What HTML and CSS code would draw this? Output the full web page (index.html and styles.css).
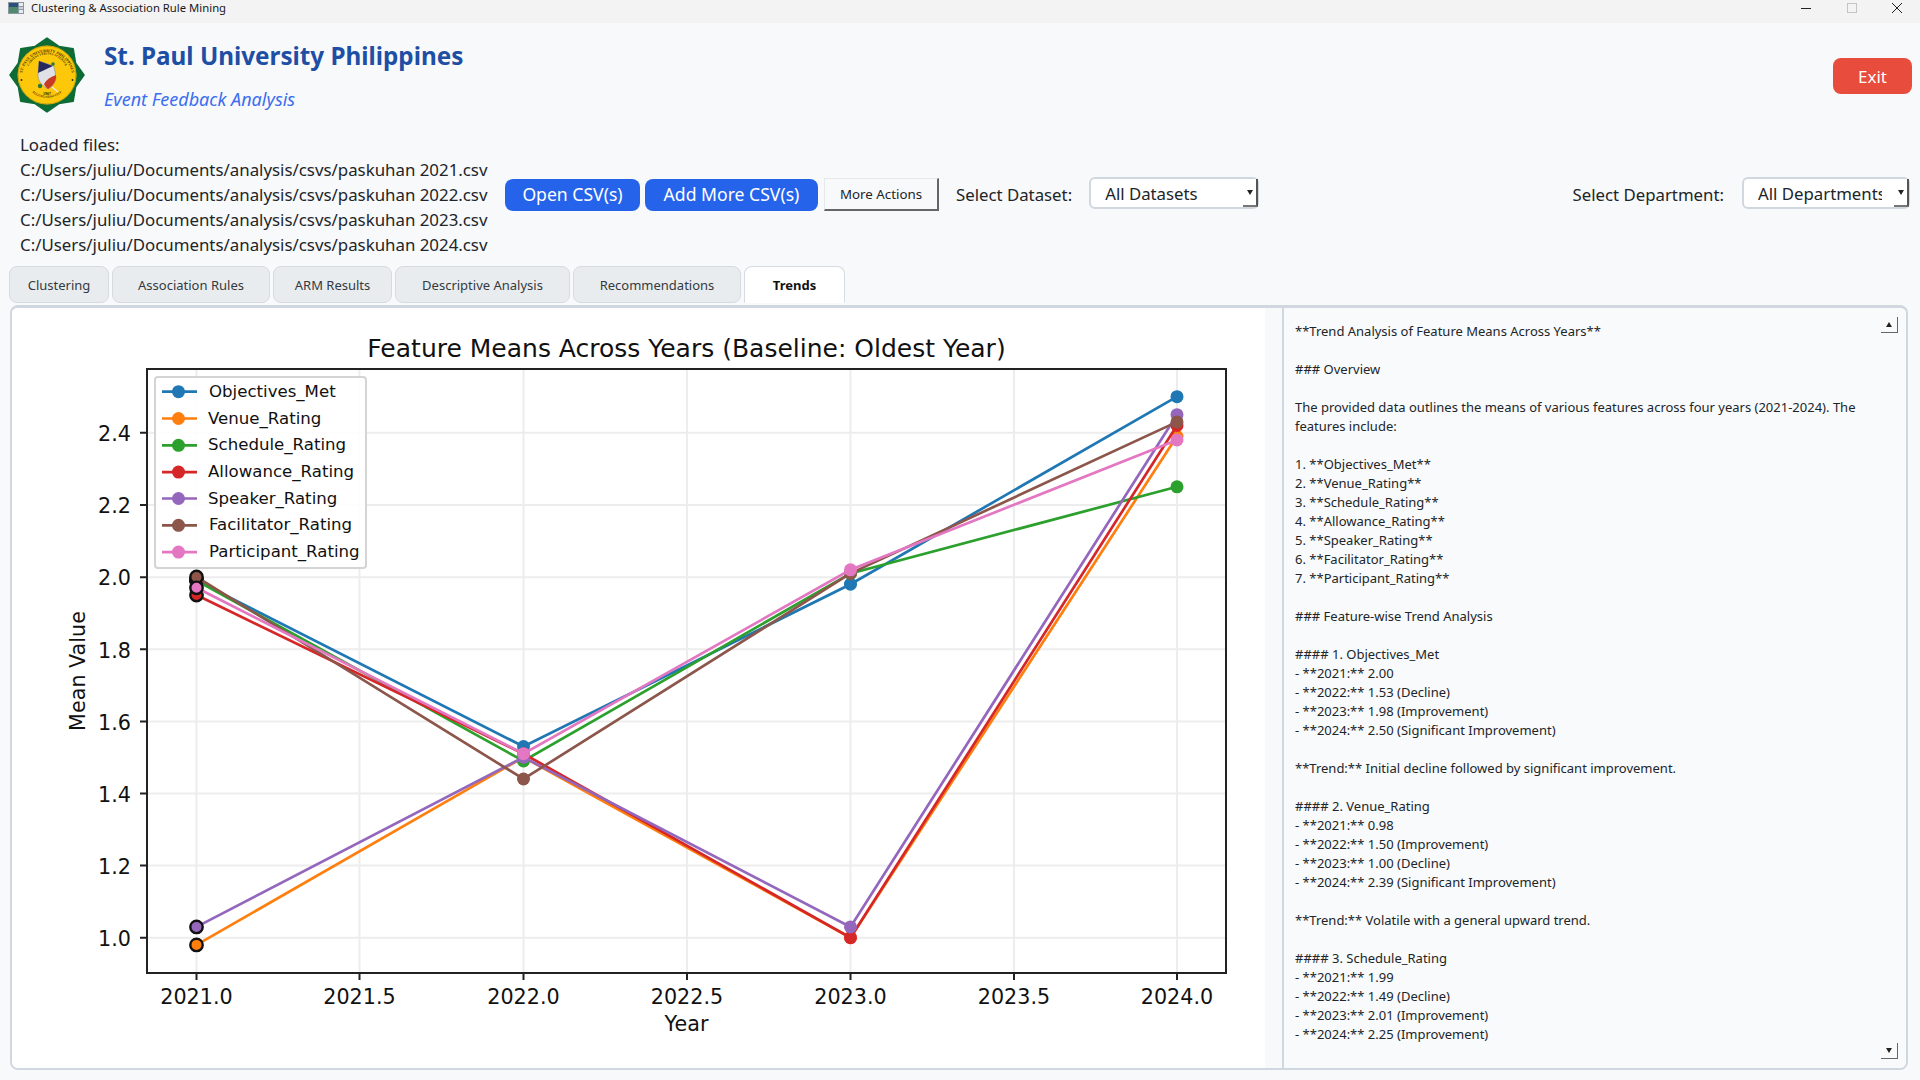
FILE: index.html
```html
<!DOCTYPE html>
<html lang="en">
<head>
    <meta charset="UTF-8" />
    <title>Clustering &amp; Association Rule Mining</title>
    <link rel="stylesheet" href="styles.css">
</head>
<body>
<div class="window">
    <!-- Title bar -->
    <div class="titlebar">
        <svg class="app-icon" width="16" height="12" viewBox="0 0 16 12">
            <rect width="16" height="12" fill="#8a97a5"/>
            <rect x="1" y="1" width="9" height="10" fill="#4f8a6c"/>
            <rect x="1" y="1" width="9" height="4" fill="#2c4f7c"/>
            <rect x="11" y="1" width="4" height="3" fill="#e8ecef"/>
            <rect x="11" y="5" width="4" height="2" fill="#c9d2d8"/>
            <rect x="11" y="8" width="4" height="3" fill="#e8ecef"/>
        </svg>
        <span class="titlebar-text">Clustering &amp; Association Rule Mining</span>
        <div class="window-controls">
            <svg width="12" height="12" viewBox="0 0 12 12"><path d="M1 6.5H11" stroke="#222" stroke-width="1"/></svg>
            <svg width="12" height="12" viewBox="0 0 12 12"><rect x="1.5" y="1.5" width="9" height="9" fill="none" stroke="#c4c4c4"/></svg>
            <svg width="12" height="12" viewBox="0 0 12 12"><path d="M1 1L11 11M11 1L1 11" stroke="#222" stroke-width="1"/></svg>
        </div>
    </div>

    <!-- Header with logo -->
    <div class="header">
        <svg class="logo" width="78" height="78" viewBox="-39 -39 78 78">
            <path d="M0-37 11.9-28.6 26.2-26.2 28.6-11.9 37 0 28.6 11.9 26.2 26.2 11.9 28.6 0 37-11.9 28.6-26.2 26.2-28.6 11.9-37 0-28.6-11.9-26.2-26.2-11.9-28.6Z" fill="#0d6b35" stroke="#0d6b35" stroke-width="1.5" stroke-linejoin="round"/>
            <circle r="29.5" fill="#fdc80a"/>
            <circle r="29" fill="none" stroke="#8a7a1a" stroke-width=".5"/>
            <path id="ring" d="M-25 2A25 25 0 0 1 25 2" fill="none"/>
            <text class="logo-ring"><textPath href="#ring" startOffset="50%" text-anchor="middle">ST. PAUL UNIVERSITY PHILIPPINES</textPath></text>
            <path id="ring2" d="M-20.500 0A20.500 20.500 0 0 1 20.500 0" fill="none"/>
            <text class="logo-ring small"><textPath href="#ring2" startOffset="50%" text-anchor="middle">CARITAS VERITAS SCIENTIA</textPath></text>
            <path id="ring3" d="M-20 12A24 24 0 0 0 20 12" fill="none"/>
            <text class="logo-ring small"><textPath href="#ring3" startOffset="50%" text-anchor="middle">TUGUEGARAO CITY</textPath></text>
            <path d="M-8-14 7-9 9 3C8 9 4 12 1 14-3 12-9 7-9 1Z" fill="#dfe1e6" stroke="#666" stroke-width=".4"/>
            <path d="M-8-14 6-9-9-2Z" fill="#27285f"/>
            <path d="M9 0 9 3C8 9 4 12 1 14-1 12.500-2 11-3 9-1 5 3 2 9 0Z" fill="#c93a22"/>
            <circle cx="6" cy="-11" r="1.800" fill="#2c7a35"/>
            <circle cx="-7" cy="11" r="2.200" fill="#2c7a35"/>
            <path d="M5 12 11 17" stroke="#e8e8e8" stroke-width="1.500"/>
            <text class="logo-year" x="0" y="20" text-anchor="middle">1907</text>
            <circle cx="-25.500" cy="5" r=".9" fill="#222"/>
            <circle cx="25.500" cy="5" r=".9" fill="#222"/>
        </svg>
        <div class="brand">
            <div class="brand-title">St. Paul University Philippines</div>
            <div class="brand-sub">Event Feedback Analysis</div>
        </div>
        <button class="btn btn-exit">Exit</button>
    </div>

    <!-- Files and actions row -->
    <div class="controls">
        <div class="files">
            <div>Loaded files:</div>
            <div>C:/Users/juliu/Documents/analysis/csvs/paskuhan 2021.csv</div>
            <div>C:/Users/juliu/Documents/analysis/csvs/paskuhan 2022.csv</div>
            <div>C:/Users/juliu/Documents/analysis/csvs/paskuhan 2023.csv</div>
            <div>C:/Users/juliu/Documents/analysis/csvs/paskuhan 2024.csv</div>
        </div>
        <button class="btn btn-blue btn-open">Open CSV(s)</button>
        <button class="btn btn-blue btn-add">Add More CSV(s)</button>
        <button class="btn-more">More Actions</button>
        <span class="field-label">Select Dataset:</span>
        <div class="combo"><span class="combo-text">All Datasets</span><span class="combo-drop"></span></div>
        <span class="field-label dept-label">Select Department:</span>
        <div class="combo combo-dept"><span class="combo-text">All Departments</span><span class="combo-drop"></span></div>
    </div>

    <!-- Tabs -->
    <div class="tabs">
        <div class="tab">Clustering</div>
        <div class="tab">Association Rules</div>
        <div class="tab">ARM Results</div>
        <div class="tab">Descriptive Analysis</div>
        <div class="tab">Recommendations</div>
        <div class="tab tab-active">Trends</div>
    </div>

    <!-- Trends tab: chart on the left, text on the right -->
    <div class="panel">
        <div class="chart-area">
            <svg class="chart" width="1253" height="760" viewBox="12 308 1253 760">
                <g class="grid">
                    <path d="M196.500 369V973M359.500 369V973M523.500 369V973M687 369V973M850.500 369V973M1014 369V973M1177 369V973"/>
                    <path d="M147 937.700H1226M147 865.600H1226M147 793.500H1226M147 721.400H1226M147 649.300H1226M147 577.200H1226M147 505H1226M147 432.800H1226"/>
                </g>

                <g class="series c1">
                    <polyline points="196.500,580.600 523.500,746.500 850.500,584.200 1177,396.700"/>
                    <circle class="first" cx="196.500" cy="580.600"/><circle cx="523.500" cy="746.500"/><circle cx="850.500" cy="584.200"/><circle cx="1177" cy="396.700"/>
                </g>
                <g class="series c2">
                    <polyline points="196.500,944.900 523.500,757.300 850.500,937.700 1177,436.300"/>
                    <circle class="first" cx="196.500" cy="944.900"/><circle cx="523.500" cy="757.300"/><circle cx="850.500" cy="937.700"/><circle cx="1177" cy="436.300"/>
                </g>
                <g class="series c3">
                    <polyline points="196.500,580.600 523.500,761 850.500,573.400 1177,486.800"/>
                    <circle class="first" cx="196.500" cy="580.600"/><circle cx="523.500" cy="761"/><circle cx="850.500" cy="573.400"/><circle cx="1177" cy="486.800"/>
                </g>
                <g class="series c4">
                    <polyline points="196.500,595 523.500,753.700 850.500,937.700 1177,425.500"/>
                    <circle class="first" cx="196.500" cy="595"/><circle cx="523.500" cy="753.700"/><circle cx="850.500" cy="937.700"/><circle cx="1177" cy="425.500"/>
                </g>
                <g class="series c5">
                    <polyline points="196.500,926.900 523.500,757.300 850.500,926.900 1177,414.700"/>
                    <circle class="first" cx="196.500" cy="926.900"/><circle cx="523.500" cy="757.300"/><circle cx="850.500" cy="926.900"/><circle cx="1177" cy="414.700"/>
                </g>
                <g class="series c6">
                    <polyline points="196.500,577 523.500,779 850.500,573.400 1177,421.900"/>
                    <circle class="first" cx="196.500" cy="577"/><circle cx="523.500" cy="779"/><circle cx="850.500" cy="573.400"/><circle cx="1177" cy="421.900"/>
                </g>
                <g class="series c7">
                    <polyline points="196.500,587.800 523.500,753.700 850.500,569.800 1177,439.900"/>
                    <circle class="first" cx="196.500" cy="587.800"/><circle cx="523.500" cy="753.700"/><circle cx="850.500" cy="569.800"/><circle cx="1177" cy="439.900"/>
                </g>

                <rect class="spines" x="147" y="369" width="1079" height="604"/>
                <path class="ticks" d="M196.500 973v7M359.500 973v7M523.500 973v7M687 973v7M850.500 973v7M1014 973v7M1177 973v7M147 937.700h-7M147 865.600h-7M147 793.500h-7M147 721.400h-7M147 649.300h-7M147 577.200h-7M147 505h-7M147 432.800h-7"/>

                <text class="chart-title" x="686.500" y="357" text-anchor="middle">Feature Means Across Years (Baseline: Oldest Year)</text>

                <g class="tick-text" text-anchor="middle">
                    <text x="196.500" y="1004">2021.0</text>
                    <text x="359.500" y="1004">2021.5</text>
                    <text x="523.500" y="1004">2022.0</text>
                    <text x="687" y="1004">2022.5</text>
                    <text x="850.500" y="1004">2023.0</text>
                    <text x="1014" y="1004">2023.5</text>
                    <text x="1177" y="1004">2024.0</text>
                </g>
                <g class="tick-text" text-anchor="end">
                    <text x="131" y="946">1.0</text>
                    <text x="131" y="874">1.2</text>
                    <text x="131" y="802">1.4</text>
                    <text x="131" y="730">1.6</text>
                    <text x="131" y="658">1.8</text>
                    <text x="131" y="585">2.0</text>
                    <text x="131" y="513">2.2</text>
                    <text x="131" y="441">2.4</text>
                </g>
                <text class="tick-text" x="686.500" y="1031" text-anchor="middle">Year</text>
                <text class="tick-text" transform="translate(85 671) rotate(-90)" text-anchor="middle">Mean Value</text>

                <rect class="legend-box" x="155" y="377" width="211" height="191" rx="3"/>
                <g class="series c1"><path d="M162 391.700H197"/><circle cx="178.500" cy="391.700"/></g>
                <g class="series c2"><path d="M162 418.500H197"/><circle cx="178.500" cy="418.500"/></g>
                <g class="series c3"><path d="M162 445.300H197"/><circle cx="178.500" cy="445.300"/></g>
                <g class="series c4"><path d="M162 472.100H197"/><circle cx="178.500" cy="472.100"/></g>
                <g class="series c5"><path d="M162 498.500H197"/><circle cx="178.500" cy="498.500"/></g>
                <g class="series c6"><path d="M162 525.300H197"/><circle cx="178.500" cy="525.300"/></g>
                <g class="series c7"><path d="M162 552.100H197"/><circle cx="178.500" cy="552.100"/></g>
                <g class="legend-text">
                    <text x="209" y="397">Objectives_Met</text>
                    <text x="208" y="424">Venue_Rating</text>
                    <text x="208" y="450">Schedule_Rating</text>
                    <text x="208" y="477">Allowance_Rating</text>
                    <text x="208" y="504">Speaker_Rating</text>
                    <text x="209" y="530">Facilitator_Rating</text>
                    <text x="209" y="557">Participant_Rating</text>
                </g>
            </svg>
        </div>
        <div class="text-panel">
            <pre class="report">**Trend Analysis of Feature Means Across Years**

### Overview

The provided data outlines the means of various features across four years (2021-2024). The
features include:

1. **Objectives_Met**
2. **Venue_Rating**
3. **Schedule_Rating**
4. **Allowance_Rating**
5. **Speaker_Rating**
6. **Facilitator_Rating**
7. **Participant_Rating**

### Feature-wise Trend Analysis

#### 1. Objectives_Met
- **2021:** 2.00
- **2022:** 1.53 (Decline)
- **2023:** 1.98 (Improvement)
- **2024:** 2.50 (Significant Improvement)

**Trend:** Initial decline followed by significant improvement.

#### 2. Venue_Rating
- **2021:** 0.98
- **2022:** 1.50 (Improvement)
- **2023:** 1.00 (Decline)
- **2024:** 2.39 (Significant Improvement)

**Trend:** Volatile with a general upward trend.

#### 3. Schedule_Rating
- **2021:** 1.99
- **2022:** 1.49 (Decline)
- **2023:** 2.01 (Improvement)
- **2024:** 2.25 (Improvement)</pre>
            <div class="scrollbar">
                <span class="scroll-btn"><i class="arrow-up"></i></span>
                <span class="scroll-btn"><i class="arrow-down"></i></span>
            </div>
        </div>
    </div>
</div>
</body>
</html>
```

FILE: styles.css
```css
* {
box-sizing: border-box;
}
body {
margin: 0;
background: #f8f9fa;
font-family: "Noto Sans", "Open Sans", sans-serif;
color: #212529;
overflow: hidden;
}
.window {
width: 1920px;
height: 1080px;
display: flex;
flex-direction: column;
}

/* Title bar */
.titlebar {
height: 23px;
flex: none;
background: #f3f3f3;
display: flex;
align-items: center;
padding-left: 8px;
}
.app-icon {
margin-bottom: 8px;
}
.titlebar-text {
margin-left: 7px;
margin-bottom: 9px;
font-size: 11.300px;
color: #1a1a1a;
}
.window-controls {
margin-left: auto;
margin-right: 17px;
margin-bottom: 8px;
display: flex;
gap: 33.500px;
}

/* Header */
.header {
height: 109px;
flex: none;
display: flex;
padding: 13px 8px 0 8px;
}
.logo {
flex: none;
}
.logo-ring {
font-family: "Liberation Serif", serif;
font-size: 4px;
font-weight: bold;
fill: #3a3000;
}
.logo-ring.small {
font-size: 3.2px;
}
.logo-year {
font-family: "Liberation Serif", serif;
font-size: 4px;
font-weight: bold;
fill: #2a2400;
}
.brand {
margin-left: 18px;
}
.brand-title {
font-size: 24.250px;
font-weight: 700;
line-height: 32px;
margin-top: 4px;
color: #1e4fa5;
}
.brand-sub {
font-size: 18px;
font-style: italic;
line-height: 24px;
margin-top: 15px;
color: #3b6ef0;
}
.btn {
border: none;
color: #fff;
font-family: inherit;
font-size: 17px;
border-radius: 8px;
padding: 0;
}
.btn-exit {
margin-left: auto;
margin-top: 22px;
width: 79px;
height: 36px;
background: #e74c3c;
}

/* Files and actions */
.controls {
height: 125px;
flex: none;
display: flex;
align-items: center;
padding: 0 10px 0 20px;
font-size: 16.800px;
}
.files {
width: 485px;
font-size: 16.850px;
line-height: 25px;
flex: none;
}
.btn-blue {
height: 32px;
background: #2563eb;
flex: none;
font-size: 17.600px;
padding-bottom: 2px;
}
.btn-open {
width: 135px;
}
.btn-add {
width: 173px;
margin-left: 5px;
}
.btn-more {
width: 115px;
height: 33px;
margin-left: 6px;
background: #f8f9fa;
border: 1px solid #e6e8ea;
border-right: 2px solid #666;
border-bottom: 2px solid #666;
font-family: inherit;
font-size: 13.300px;
color: #212529;
flex: none;
padding: 0;
}
.field-label {
margin-left: 17px;
flex: none;
}
.dept-label {
margin-left: auto;
}
.combo {
width: 170px;
height: 32px;
margin-left: 17px;
margin-bottom: 3px;
background: #fff;
border: 2px solid #d0d7de;
border-radius: 6px;
display: flex;
align-items: center;
padding-left: 14px;
flex: none;
position: relative;
}
.combo-dept {
width: 168px;
margin-left: 18px;
}
.combo-text {
width: 124px;
overflow: hidden;
white-space: nowrap;
}
.combo-drop {
position: absolute;
right: -1px;
top: 0;
width: 15px;
height: 28px;
background: #fff;
border-right: 2px solid #555;
border-bottom: 2px solid #777;
}
.combo-drop::after {
content: "";
position: absolute;
left: 4px;
top: 11px;
border-left: 3px solid transparent;
border-right: 3px solid transparent;
border-top: 5px solid #222;
}

/* Tabs */
.tabs {
display: grid;
grid-template-columns: 100px 158px 119px 175px 168px 101px;
gap: 3px;
height: 37px;
margin: 9px 0 2px 9px;
flex: none;
}
.tab {
background: #e9ecef;
border: 1px solid #d5dbe1;
border-radius: 8px;
font-size: 13px;
display: flex;
align-items: center;
justify-content: center;
color: #343a40;
}
.tab-active {
background: #fff;
font-weight: 700;
color: #111;
border-bottom-color: #fff;
border-radius: 8px 8px 0 0;
}

/* Panel */
.panel {
height: 765px;
flex: none;
margin: 0 12px 0 10px;
border: 2px solid #d0d7de;
border-top-width: 3px;
border-radius: 8px;
display: flex;
overflow: hidden;
}
.chart-area {
width: 1253px;
flex: none;
background: #fff;
}
.chart {
display: block;
font-family: "DejaVu Sans", sans-serif;
}
.grid path {
fill: none;
stroke: #ededed;
stroke-width: 2;
}
.series polyline, .series path {
fill: none;
stroke-width: 2.7;
}
.series circle {
r: 6.500px;
}
.series circle.first {
r: 6.200px;
stroke: #111;
stroke-width: 2.400;
}
.c1 polyline, .c1 path { stroke: #1f77b4; }
.c1 circle { fill: #1f77b4; }
.c2 polyline, .c2 path { stroke: #ff7f0e; }
.c2 circle { fill: #ff7f0e; }
.c3 polyline, .c3 path { stroke: #2ca02c; }
.c3 circle { fill: #2ca02c; }
.c4 polyline, .c4 path { stroke: #d62728; }
.c4 circle { fill: #d62728; }
.c5 polyline, .c5 path { stroke: #9467bd; }
.c5 circle { fill: #9467bd; }
.c6 polyline, .c6 path { stroke: #8c564b; }
.c6 circle { fill: #8c564b; }
.c7 polyline, .c7 path { stroke: #e377c2; }
.c7 circle { fill: #e377c2; }
.spines {
fill: none;
stroke: #222;
stroke-width: 2;
}
.ticks {
fill: none;
stroke: #222;
stroke-width: 2;
}
.chart-title {
font-size: 25px;
fill: #111;
}
.tick-text {
font-size: 20.700px;
fill: #111;
}
.legend-box {
fill: #fff;
fill-opacity: .85;
stroke: #d4d4d4;
stroke-width: 2;
}
.legend-text {
font-size: 16.600px;
fill: #111;
}
.text-panel {
flex: 1;
min-width: 0;
margin-left: 17px;
background: #f8fafc;
border-left: 2px solid #d0d7de;
display: flex;
justify-content: space-between;
padding: 9px 8px 9px 11px;
}
.report {
margin: 5px 0 0;
font-family: inherit;
font-size: 13px;
line-height: 19px;
color: #212529;
}
.scrollbar {
width: 17px;
display: flex;
flex-direction: column;
justify-content: space-between;
}
.scroll-btn {
width: 17px;
height: 16px;
background: #fafafa;
border-right: 1px solid #666;
border-bottom: 1px solid #666;
display: flex;
align-items: center;
justify-content: center;
}
.arrow-up {
border-left: 3px solid transparent;
border-right: 3px solid transparent;
border-bottom: 5px solid #222;
}
.arrow-down {
border-left: 3px solid transparent;
border-right: 3px solid transparent;
border-top: 5px solid #222;
}
```
